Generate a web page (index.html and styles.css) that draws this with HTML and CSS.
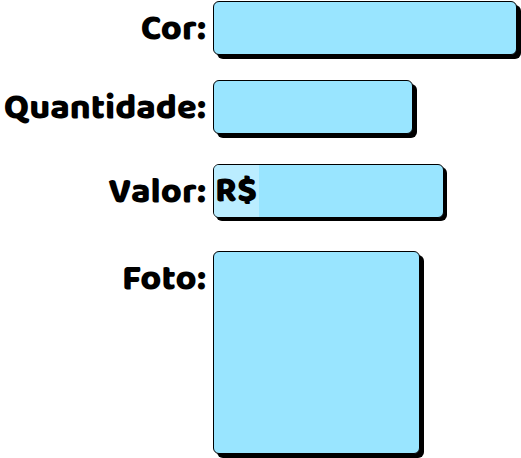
FILE: index.html
```
<!DOCTYPE html>
<html lang="pt-BR">
<head>
<meta charset="utf-8">
<meta name="viewport" content="width=device-width, initial-scale=1">
<title>Produto</title>
<link rel="stylesheet" href="styles.css">
</head>
<body>
<form class="form">
  <div class="row">
    <label class="label" for="cor">Cor:</label>
    <input class="box" id="cor" type="text">
  </div>
  <div class="row">
    <label class="label" for="quantidade">Quantidade:</label>
    <input class="box box-short" id="quantidade" type="text" inputmode="numeric">
  </div>
  <div class="row row-price">
    <label class="label" for="valor">Valor:</label>
    <div class="box box-medium">
      <span class="prefix">R$</span>
      <input class="amount" id="valor" type="text" inputmode="decimal">
    </div>
  </div>
  <div class="row row-photo">
    <label class="label" for="foto">Foto:</label>
    <input class="box box-photo" id="foto" type="file" accept="image/*">
  </div>
</form>
</body>
</html>
```
FILE: styles.css
```
* {
  box-sizing: border-box;
}

body {
  margin: 0;
  background: #fff;
  color: #000;
  font-family: "Baloo", "Baloo 2", Lato, sans-serif;
  font-size: 36px;
  font-weight: 900;
  line-height: 52px;
}

.form {
  display: flex;
  flex-direction: column;
  gap: 25px;
  padding: 1px 4px 4px 0;
}

.row {
  display: grid;
  grid-template-columns: 206px minmax(0, 1fr);
  column-gap: 7px;
  align-items: start;
}

.row-price {
  padding-top: 5px;
}

.row-photo {
  padding-top: 8px;
}

.label {
  padding-top: 2px;
  text-align: right;
  white-space: nowrap;
}

.box {
  width: 100%;
  height: 54px;
  margin: 0;
  padding: 0 8px;
  border: 1px solid #000;
  border-radius: 6px;
  background: #99e5ff;
  box-shadow: 4px 4px 0 #000;
  font: inherit;
  outline: none;
}

.box-short {
  max-width: 200px;
}

.box-medium {
  display: flex;
  max-width: 231px;
  padding: 0;
  box-shadow: 3px 3px 0 #000;
  line-height: 52px;
}

.box-photo {
  max-width: 207px;
  height: 203px;
  color: transparent;
}

.box-photo::file-selector-button {
  display: none;
}

.prefix {
  padding: 0 2px 0 1px;
  border-radius: 5px 0 0 5px;
  background: #bbedff;
}

.amount {
  flex: 1;
  min-width: 0;
  padding: 0 4px;
  border: 0;
  background: transparent;
  font: inherit;
  outline: none;
}
```
